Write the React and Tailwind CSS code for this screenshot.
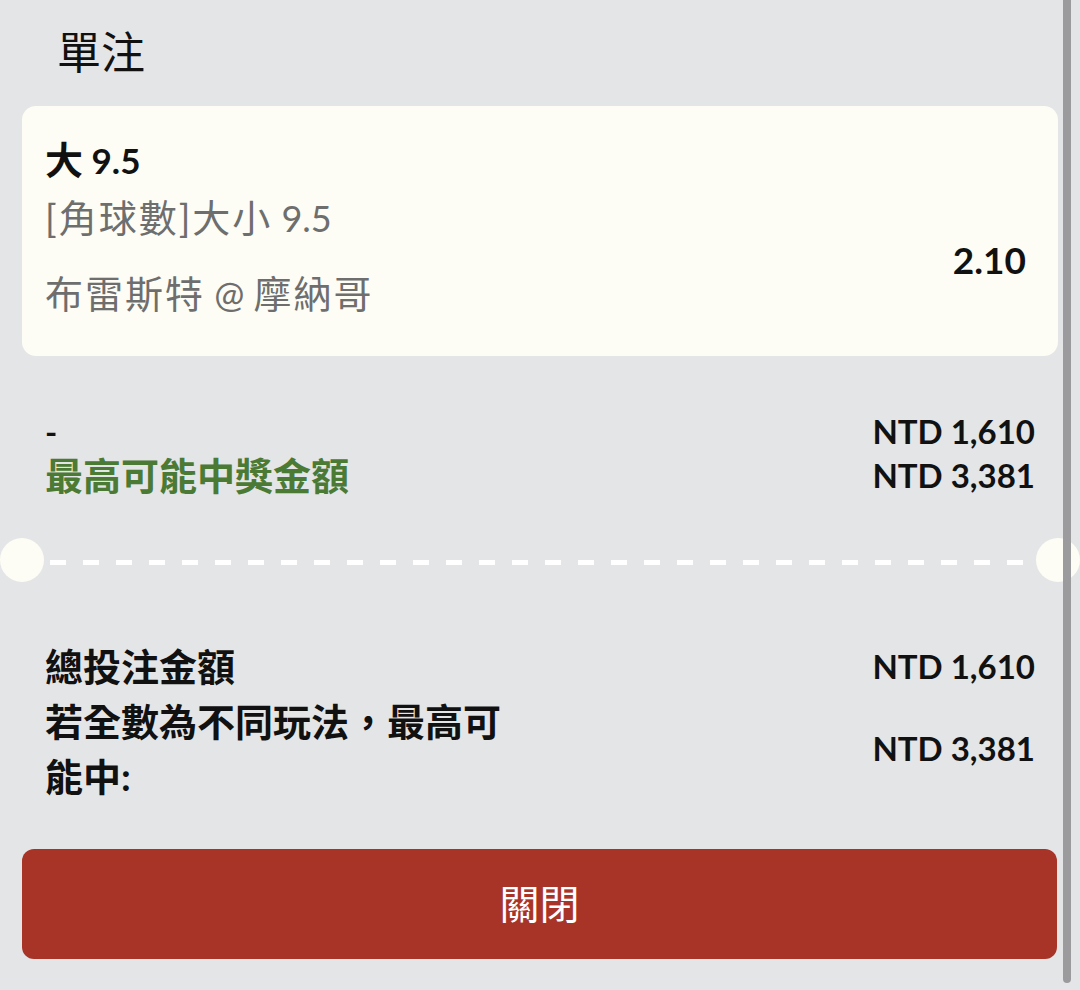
import React from "react";

const FONT = "font-['Lato','Noto_Sans_CJK_TC',sans-serif]";

function Cjk({ children, className = "" }) {
  return <span className={`text-[38px] ${className}`}>{children}</span>;
}

function Num({ children, className = "" }) {
  return <span className={`text-[33px] ${className}`}>{children}</span>;
}

export default function App() {
  return (
    <div
      className={`relative min-h-[990px] w-full overflow-hidden bg-[#e4e5e7] text-[#111] ${FONT}`}
    >
      {/* Title */}
      <div className="pl-[57px] pt-[24px] text-[44px] leading-[56px] font-normal">
        單注
      </div>

      {/* Selection card */}
      <div className="mx-[22px] mt-[26px] flex h-[250px] justify-between rounded-[14px] bg-[#fdfdf5] pl-[23px] pr-[32px] pt-[31px]">
        <div className="flex flex-col">
          <div className="h-[44px] leading-[44px] font-bold">
            <Cjk>大</Cjk>
            <Num className="text-[35px]">{" 9.5"}</Num>
          </div>
          <div className="mt-[14px] h-[44px] leading-[44px] text-[#6e6e6e]">
            <Cjk className="tracking-[2px]">[角球數]大小</Cjk>
            <Num className="text-[36px]">{" 9.5"}</Num>
          </div>
          <div className="mt-[32px] h-[44px] leading-[44px] text-[#6e6e6e]">
            <Cjk className="tracking-[2px]">布雷斯特</Cjk>
            <Num className="text-[36px]">{" @ "}</Num>
            <Cjk className="tracking-[2px]">摩納哥</Cjk>
          </div>
        </div>
        <div className="mt-[101px] text-[37px] font-bold leading-[44px]">
          2.10
        </div>
      </div>

      {/* Odds / potential win */}
      <div className="mx-[22px] mt-[53px] flex flex-col px-[23px] font-bold">
        <div className="flex h-[44px] items-center justify-between leading-[44px]">
          <Num>-</Num>
          <Num>NTD 1,610</Num>
        </div>
        <div className="flex h-[44px] items-center justify-between leading-[44px]">
          <Cjk className="text-[#4b7a34]">最高可能中獎金額</Cjk>
          <Num>NTD 3,381</Num>
        </div>
      </div>

      {/* Ticket divider */}
      <div className="relative mx-[22px] mt-[41px] flex h-[44px] items-center">
        <div className="absolute left-[-22px] top-0 h-[44px] w-[44px] rounded-full bg-[#fdfdf5]" />
        <div className="absolute right-[-22px] top-0 h-[44px] w-[44px] rounded-full bg-[#fdfdf5]" />
        <div className="mx-[28px] mt-[5px] h-[5px] flex-1 bg-[repeating-linear-gradient(90deg,#ffffff_0_16px,transparent_16px_33px)]" />
      </div>

      {/* Totals */}
      <div className="mx-[22px] mt-[57px] flex flex-col px-[23px] font-bold">
        <div className="flex h-[55px] items-center justify-between leading-[55px]">
          <Cjk>總投注金額</Cjk>
          <Num>NTD 1,610</Num>
        </div>
        <div className="flex items-center justify-between">
          <div className="w-[470px] text-[38px] leading-[55px]">
            若全數為不同玩法，最高可能中:
          </div>
          <Num>NTD 3,381</Num>
        </div>
      </div>

      {/* Close button */}
      <button className="mx-[22px] mt-[45px] flex h-[110px] w-[1035px] items-center justify-center rounded-[12px] bg-[#a83427] text-[40px] font-normal text-white">
        關閉
      </button>

      {/* Scrollbar */}
      <div className="absolute right-[9px] top-0 h-[983px] w-[8px] rounded-b-full bg-[#9b9b9d]" />
    </div>
  );
}
